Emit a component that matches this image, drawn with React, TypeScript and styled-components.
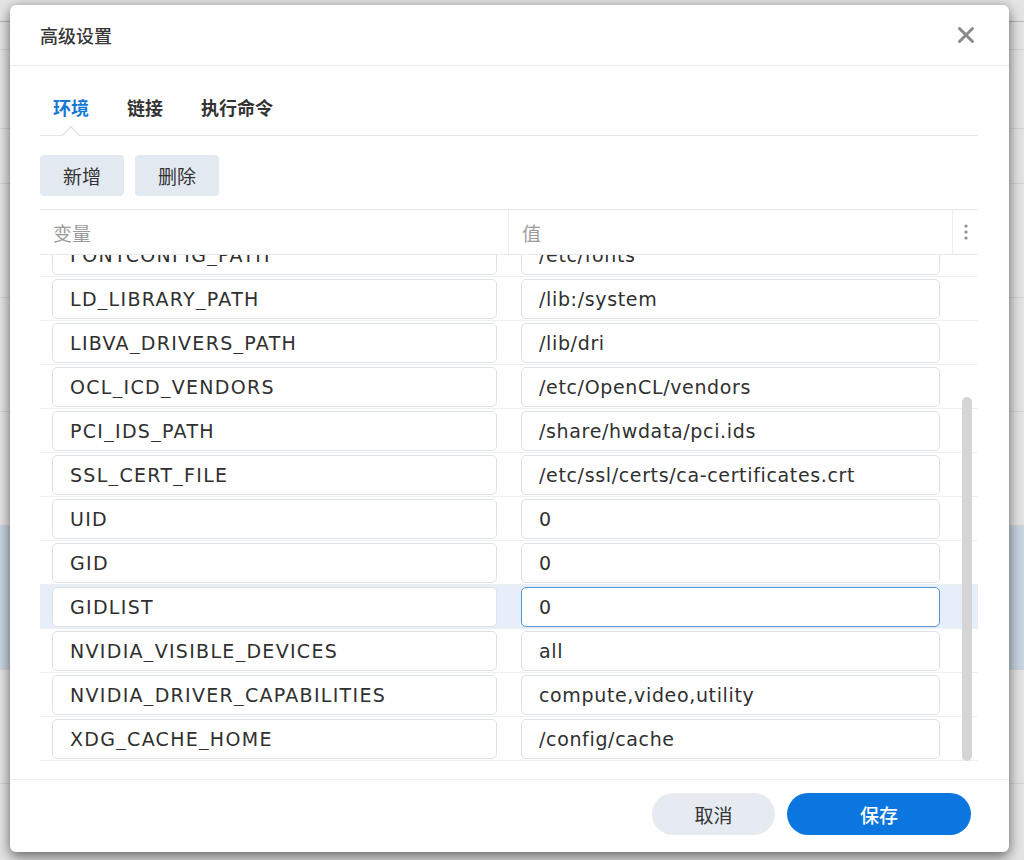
import React, { useLayoutEffect, useRef, useState } from 'react'
import styled, { createGlobalStyle } from 'styled-components'

const GlobalStyle = createGlobalStyle`
  html, body {
    margin: 0;
    padding: 0;
  }
  body {
    background: #e4e4e4;
    font-family: "DejaVu Sans", "Noto Sans CJK SC", sans-serif;
  }
  * {
    box-sizing: border-box;
  }
`

const CJK = `"Noto Sans CJK SC", "DejaVu Sans", sans-serif`

/* the app page behind the modal */
const Screen = styled.div`
  position: relative;
  width: 1024px;
  height: 860px;
  overflow: hidden;
  background: #e4e4e4;
`

const BackdropList = styled.div`
  display: flex;
  flex-direction: column;
`

const BackdropRow = styled.div<{ $h: number; $selected?: boolean; $strong?: boolean }>`
  height: ${p => p.$h}px;
  border-bottom: 1px solid ${p => (p.$strong ? '#b4b4b4' : '#d2d2d2')};
  background: ${p => (p.$selected ? '#c8d4e1' : 'transparent')};
`

/* modal */
const Dialog = styled.div`
  position: absolute;
  left: 10px;
  top: 5px;
  width: 999px;
  height: 847px;
  background: #fff;
  border-radius: 6px;
  box-shadow: 0 6px 14px rgba(0, 0, 0, 0.45), 0 0 10px rgba(0, 0, 0, 0.18);
  display: flex;
  flex-direction: column;
`

const Header = styled.div`
  height: 61px;
  flex-shrink: 0;
  display: flex;
  align-items: center;
  justify-content: space-between;
  padding: 0 32px 0 30px;
  border-bottom: 1px solid #e9ecef;
`

const Title = styled.div`
  font-family: ${CJK};
  font-size: 18px;
  font-weight: 500;
  color: #383838;
`

const CloseButton = styled.button`
  width: 22px;
  height: 22px;
  padding: 0;
  border: none;
  background: none;
  display: flex;
  align-items: center;
  justify-content: center;
  cursor: pointer;
`

const Body = styled.div`
  flex: 1;
  display: flex;
  flex-direction: column;
  padding: 0 31px 0 30px;
`

const Tabs = styled.div`
  display: flex;
  gap: 38px;
  padding: 29px 0 0 13px;
  border-bottom: 1px solid #e4e7ea;
`

const Tab = styled.div<{ $active?: boolean }>`
  position: relative;
  font-family: ${CJK};
  font-size: 18px;
  font-weight: 700;
  line-height: 24px;
  padding-bottom: 16px;
  color: ${p => (p.$active ? '#1479d6' : '#333')};
`

const TabCaret = styled.span`
  position: absolute;
  left: 50%;
  bottom: -8px;
  width: 14px;
  height: 14px;
  margin-left: -7px;
  background: #fff;
  border-top: 1px solid #d6dbe0;
  border-left: 1px solid #d6dbe0;
  transform: rotate(45deg);
`

const Toolbar = styled.div`
  display: flex;
  gap: 11px;
  margin-top: 19px;
`

const ToolButton = styled.button`
  height: 41px;
  padding: 0 23px;
  border: none;
  border-radius: 4px;
  background: #e3e9f0;
  color: #333;
  font-family: ${CJK};
  font-size: 19px;
  cursor: pointer;
`

const Table = styled.div`
  margin-top: 13px;
  border-top: 1px solid #e6e9ec;
`

const columns = `469px 444px 1fr`

const HeaderRow = styled.div`
  display: grid;
  grid-template-columns: ${columns};
  height: 45px;
  border-bottom: 1px solid #e6e9ec;
`

const HeaderCell = styled.div<{ $divider?: boolean }>`
  display: flex;
  align-items: center;
  padding-left: 13px;
  font-family: ${CJK};
  font-size: 19px;
  color: #9b9b9b;
  border-right: ${p => (p.$divider ? '1px solid #eceef0' : 'none')};
`

const MenuCell = styled.div`
  display: flex;
  align-items: center;
  justify-content: center;
`

const ScrollArea = styled.div`
  position: relative;
  height: 506px;
`

const Viewport = styled.div`
  height: 100%;
  overflow: hidden;
`

const Row = styled.div<{ $selected?: boolean }>`
  display: grid;
  grid-template-columns: ${columns};
  align-items: center;
  height: 44px;
  border-bottom: 1px solid #edf0f2;
  background: ${p => (p.$selected ? '#e6eef9' : 'transparent')};
`

const Cell = styled.div<{ $right?: number }>`
  padding: 0 ${p => p.$right ?? 12}px 0 12px;
`

const Field = styled.input<{ $focused?: boolean; $spacing: number }>`
  display: block;
  width: 100%;
  height: 40px;
  padding: 0 0 0 17px;
  border: 1px solid ${p => (p.$focused ? '#5596d6' : '#dde2e7')};
  border-radius: 5px;
  background: #fff;
  color: #303030;
  font-family: "DejaVu Sans", sans-serif;
  font-size: 19px;
  letter-spacing: ${p => p.$spacing}px;
  outline: none;
`

const ScrollThumb = styled.div`
  position: absolute;
  right: 6px;
  width: 10px;
  border-radius: 5px;
  background: #d5d5d5;
`

const Footer = styled.div`
  height: 73px;
  flex-shrink: 0;
  display: flex;
  justify-content: flex-end;
  align-items: flex-start;
  gap: 12px;
  padding: 13px 38px 0 0;
  border-top: 1px solid #eceef0;
`

const FooterButton = styled.button<{ $primary?: boolean; $width: number }>`
  width: ${p => p.$width}px;
  height: 42px;
  border: none;
  border-radius: 21px;
  background: ${p => (p.$primary ? '#0b75e0' : '#e6ebf1')};
  color: ${p => (p.$primary ? '#fff' : '#333')};
  font-family: ${CJK};
  font-size: 19px;
  font-weight: ${p => (p.$primary ? 500 : 400)};
  cursor: pointer;
`

const ENV_VARS: [string, string][] = [
  ['PATH', '/usr/local/sbin:/usr/local/bin:/usr/sbin:/usr/bin:/sbin:/bin'],
  ['HOME', '/root'],
  ['TZ', 'Asia/Shanghai'],
  ['FONTCONFIG_FILE', '/etc/fonts/fonts.conf'],
  ['FONTCONFIG_PATH', '/etc/fonts'],
  ['LD_LIBRARY_PATH', '/lib:/system'],
  ['LIBVA_DRIVERS_PATH', '/lib/dri'],
  ['OCL_ICD_VENDORS', '/etc/OpenCL/vendors'],
  ['PCI_IDS_PATH', '/share/hwdata/pci.ids'],
  ['SSL_CERT_FILE', '/etc/ssl/certs/ca-certificates.crt'],
  ['UID', '0'],
  ['GID', '0'],
  ['GIDLIST', '0'],
  ['NVIDIA_VISIBLE_DEVICES', 'all'],
  ['NVIDIA_DRIVER_CAPABILITIES', 'compute,video,utility'],
  ['XDG_CACHE_HOME', '/config/cache'],
]

const SELECTED = 'GIDLIST'

const BACKDROP_ROWS = [22, 28, 79, 55, 114, 114, 114, 144, 114, 114]

function CloseIcon() {
  return (
    <svg width="18" height="18" viewBox="0 0 18 18">
      <path d="M2.5 2.5 L15.5 15.5 M15.5 2.5 L2.5 15.5" stroke="#8a8a8a" strokeWidth="3" strokeLinecap="round" />
    </svg>
  )
}

function KebabIcon() {
  return (
    <svg width="6" height="18" viewBox="0 0 6 18">
      <circle cx="3" cy="3" r="1.6" fill="#8d8d8d" />
      <circle cx="3" cy="9" r="1.6" fill="#8d8d8d" />
      <circle cx="3" cy="15" r="1.6" fill="#8d8d8d" />
    </svg>
  )
}

function EnvTable() {
  const viewportRef = useRef<HTMLDivElement>(null)
  const [thumb, setThumb] = useState({ top: 0, height: 0 })

  useLayoutEffect(() => {
    const el = viewportRef.current
    if (!el) return
    el.scrollTop = el.scrollHeight
    const track = el.clientHeight
    setThumb({
      top: (el.scrollTop / el.scrollHeight) * track,
      height: (el.clientHeight / el.scrollHeight) * track,
    })
  }, [])

  return (
    <Table>
      <HeaderRow>
        <HeaderCell $divider>变量</HeaderCell>
        <HeaderCell $divider>值</HeaderCell>
        <MenuCell>
          <KebabIcon />
        </MenuCell>
      </HeaderRow>
      <ScrollArea>
        <Viewport ref={viewportRef}>
          {ENV_VARS.map(([name, value]) => (
            <Row key={name} $selected={name === SELECTED}>
              <Cell>
                <Field readOnly defaultValue={name} $spacing={1.3} />
              </Cell>
              <Cell $right={13}>
                <Field readOnly defaultValue={value} $spacing={0.65} $focused={name === SELECTED} />
              </Cell>
              <div />
            </Row>
          ))}
        </Viewport>
        <ScrollThumb style={{ top: thumb.top, height: thumb.height }} />
      </ScrollArea>
    </Table>
  )
}

export default function App() {
  return (
    <Screen>
      <GlobalStyle />
      <BackdropList>
        {BACKDROP_ROWS.map((h, i) => (
          <BackdropRow key={i} $h={h} $strong={i === 0} $selected={i === 7} />
        ))}
      </BackdropList>

      <Dialog>
        <Header>
          <Title>高级设置</Title>
          <CloseButton aria-label="close">
            <CloseIcon />
          </CloseButton>
        </Header>

        <Body>
          <Tabs>
            <Tab $active>
              环境
              <TabCaret />
            </Tab>
            <Tab>链接</Tab>
            <Tab>执行命令</Tab>
          </Tabs>

          <Toolbar>
            <ToolButton>新增</ToolButton>
            <ToolButton>删除</ToolButton>
          </Toolbar>

          <EnvTable />
        </Body>

        <Footer>
          <FooterButton $width={123}>取消</FooterButton>
          <FooterButton $width={184} $primary>保存</FooterButton>
        </Footer>
      </Dialog>
    </Screen>
  )
}
